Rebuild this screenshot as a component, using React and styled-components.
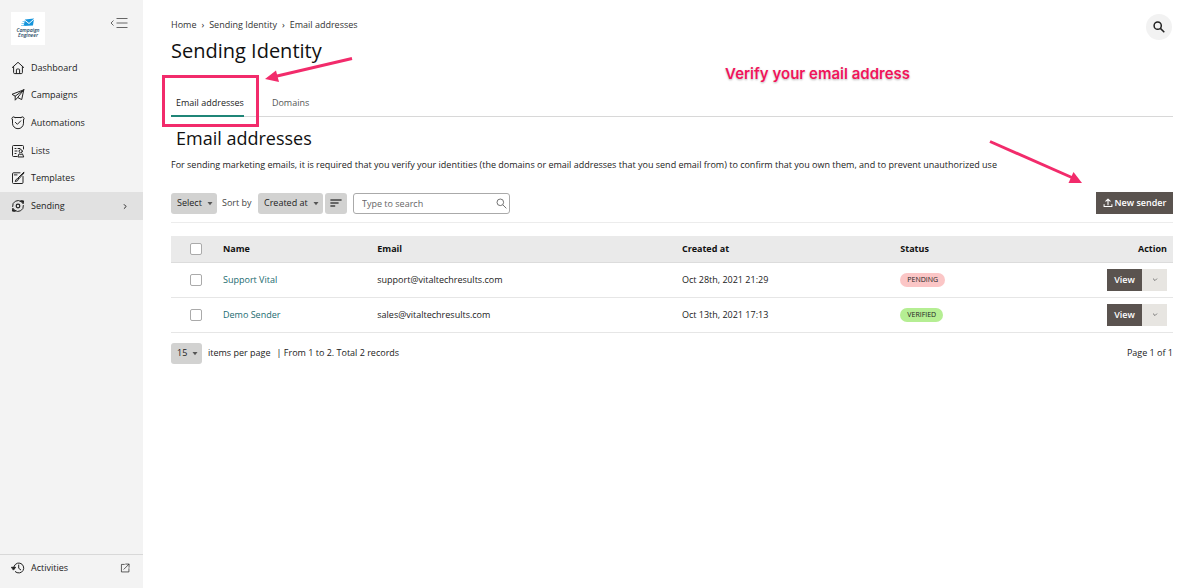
import React from "react";
import styled, { createGlobalStyle } from "styled-components";

const GlobalStyle = createGlobalStyle`
  * {
    box-sizing: border-box;
  }

  body {
    margin: 0;
    background: #fff;
    color: #222;
    font-family: "Open Sans", "Noto Sans", sans-serif;
    font-size: 9px;
    line-height: 14px;
  }

  button,
  input,
  select {
    font: inherit;
    color: inherit;
  }
`;

const Page = styled.div`
  display: flex;
  min-height: 100vh;
`;

const Sidebar = styled.aside`
  display: flex;
  flex-direction: column;
  flex: none;
  width: 143px;
  background: #f3f3f3;
`;

const SidebarTop = styled.div`
  display: flex;
  justify-content: space-between;
  align-items: flex-start;
  height: 54px;
  padding: 12px 15px 0 11px;
`;

const LogoLink = styled.a`
  display: block;
  width: 34px;
  height: 33px;
  background: #fff;
`;

const IconButton = styled.button`
  display: flex;
  align-items: center;
  justify-content: center;
  padding: 0;
  border: 0;
  background: none;
  color: #666;
`;

const CollapseButton = styled(IconButton)`
  width: 18px;
  height: 22px;
`;

const Nav = styled.nav`
  display: grid;
  grid-auto-rows: 1fr;
  height: 166px;
`;

const NavLink = styled.a`
  display: flex;
  align-items: center;
  gap: 6px;
  padding: 0 13px 0 11px;
  background: ${({ $active }) => ($active ? "#e1e1e1" : "transparent")};
  color: #222;
  text-decoration: none;

  span {
    flex: 1;
  }
`;

const SidebarBottom = styled.div`
  display: grid;
  height: 34px;
  margin-top: auto;
  padding-bottom: 8px;
  border-top: 1px solid #d8d8d8;
`;

const Main = styled.main`
  position: relative;
  flex: 1;
  min-width: 0;
  padding: 18px 27px 20px 28px;
`;

const SearchButton = styled(IconButton)`
  position: absolute;
  top: 14px;
  right: 28px;
  width: 26px;
  height: 26px;
  border-radius: 50%;
  background: #f2f2f2;
  color: #222;
`;

const Breadcrumbs = styled.nav`
  display: flex;
  gap: 5px;

  a {
    color: #333;
    text-decoration: none;
  }
`;

const Title = styled.h1`
  margin: 4px 0 0;
  font-size: 20px;
  font-weight: 400;
  line-height: 30px;
  color: #111;
`;

const Tabs = styled.nav`
  display: flex;
  gap: 23px;
  margin-top: 24px;
  border-bottom: 1px solid #d8d8d8;
`;

const Tab = styled.a`
  height: 27px;
  margin-bottom: -1px;
  padding: 6px 0 0 5px;
  border-bottom: 2px solid ${({ $active }) => ($active ? "#1f8577" : "transparent")};
  color: ${({ $active }) => ($active ? "#222" : "#555")};
  text-decoration: none;
`;

const Heading = styled.h2`
  margin: 8px 0 0 5px;
  font-size: 18px;
  font-weight: 400;
  line-height: 26px;
  color: #111;
`;

const Description = styled.p`
  margin: 7px 0 0;
`;

const Toolbar = styled.div`
  display: flex;
  align-items: center;
  height: 46px;
  margin-top: 5px;
  padding-top: 15px;
  padding-bottom: 8px;
  border-bottom: 1px solid #ececec;
`;

const SelectBox = styled.span`
  position: relative;
  display: inline-block;
  width: ${({ $width }) => $width}px;

  select {
    display: block;
    width: 100%;
    height: 21px;
    padding: 0 0 0 6px;
    border: 0;
    border-radius: 3px;
    background: #d2d2d1;
    appearance: none;
  }

  svg {
    position: absolute;
    top: 8px;
    right: 4px;
    pointer-events: none;
  }
`;

const SortLabel = styled.label`
  flex: none;
  width: 41px;
  padding-left: 5px;
  color: #444;
`;

const SortButton = styled(IconButton)`
  width: 22px;
  height: 21px;
  margin: 0 6px 0 2px;
  border-radius: 3px;
  background: #d2d2d1;
  color: #444;
`;

const SearchBox = styled.div`
  position: relative;
  width: 157px;

  input {
    display: block;
    width: 100%;
    height: 21px;
    padding: 0 20px 0 8px;
    border: 1px solid #aaa;
    border-radius: 3px;
    background: #fff;
  }

  input::placeholder {
    color: #666;
    opacity: 1;
  }

  svg {
    position: absolute;
    top: 5px;
    right: 3px;
    color: #666;
    pointer-events: none;
  }
`;

const DarkButton = styled.button`
  display: flex;
  align-items: center;
  justify-content: center;
  gap: 2px;
  width: ${({ $width }) => $width}px;
  height: 22px;
  padding: 0;
  border: 0;
  background: #5a534f;
  color: #fff;
  font-weight: 600;
`;

const NewSender = styled(DarkButton)`
  margin-left: auto;
`;

const Table = styled.table`
  width: 100%;
  margin-top: 13px;
  border-collapse: collapse;
  table-layout: fixed;

  th,
  td {
    padding: 0 6px;
    border-bottom: 1px solid #e6e6e6;
    text-align: left;
  }

  th {
    height: 26px;
    background: #eaeaea;
    border-color: #dcdcdc;
    font-weight: 700;
    color: #111;
  }

  td {
    height: 35px;
  }

  th:last-child {
    text-align: right;
  }
`;

const Col = styled.col`
  width: ${({ $width }) => $width};
`;

const Checkbox = styled.input`
  display: block;
  width: 12px;
  height: 12px;
  margin: 0 0 0 13px;
  border: 1px solid #aaa;
  border-radius: 2px;
  background: #fff;
  appearance: none;

  &:checked {
    background: #1f8577;
  }
`;

const SenderLink = styled.a`
  color: #226b70;
  text-decoration: none;
`;

const Status = styled.span`
  display: inline-block;
  padding: 0 7px;
  border-radius: 7px;
  background: ${({ $verified }) => ($verified ? "#b5ee93" : "#fbc6c6")};
  font-size: 7px;
  line-height: 14px;
  vertical-align: middle;
`;

const Actions = styled.div`
  display: flex;
  justify-content: flex-end;
`;

const MoreButton = styled(IconButton)`
  width: 25px;
  height: 22px;
  background: #e7e5e1;
`;

const Footer = styled.div`
  display: flex;
  align-items: center;
  gap: 6px;
  margin-top: 10px;
`;

const PageCount = styled.span`
  margin-left: auto;
`;

const Highlight = styled.div`
  position: absolute;
  top: 75px;
  left: 19px;
  width: 97px;
  height: 52px;
  border: 3px solid #f22b6b;
  pointer-events: none;
`;

const Callout = styled.div`
  position: absolute;
  top: 64px;
  right: 290px;
  color: #f0145a;
  font-family: Inter, "Liberation Sans", sans-serif;
  font-size: 15px;
  font-weight: 600;
  line-height: 20px;
  text-shadow: 0 0 2px #fff, 0 1px 2px rgba(0, 0, 0, 0.35);
`;

const TabArrow = styled.svg`
  position: absolute;
  top: 54px;
  left: 120px;
  pointer-events: none;
`;

const SenderArrow = styled.svg`
  position: absolute;
  top: 138px;
  right: 114px;
  pointer-events: none;
`;

const Icon = ({ size = 14, children }) => (
  <svg
    width={size}
    height={size}
    viewBox="0 0 14 14"
    fill="none"
    stroke="currentColor"
    strokeWidth="1"
    strokeLinecap="round"
    strokeLinejoin="round"
    aria-hidden="true"
  >
    {children}
  </svg>
);

const Caret = () => (
  <svg width="6" height="5" viewBox="0 0 6 5" aria-hidden="true">
    <path d="M.5 1h5L3 4.200z" fill="#555" />
  </svg>
);

const Magnifier = ({ size, width }) => (
  <svg width={size} height={size} viewBox="0 0 12 12" fill="none" stroke="currentColor" strokeWidth={width} aria-hidden="true">
    <circle cx="4.700" cy="4.700" r="3.600" />
    <path d="M7.400 7.400L11.300 11.300" />
  </svg>
);

const Logo = () => (
  <svg width="34" height="33" viewBox="0 0 34 33" aria-hidden="true">
    <path d="M14 7.500L23 6.500L22 13.500L12.500 14z" fill="#1595dc" />
    <path d="M13.500 8L18 11.500L22.800 7.200" fill="none" stroke="#fff" strokeWidth="1" />
    <path d="M10.500 11.500h3M11.500 9.500h2M10 13.500h4" stroke="#51b8ea" strokeWidth=".7" />
    <g
      fill="#24465f"
      fontFamily="Open Sans, sans-serif"
      fontSize="5"
      fontWeight="600"
      fontStyle="italic"
      textAnchor="middle"
    >
      <text x="17" y="20">Campaign</text>
      <text x="17" y="25">Engineer</text>
    </g>
  </svg>
);

const navItems = [
  {
    label: "Dashboard",
    icon: (
      <>
        <path d="M1.300 6.500L7 1.300L12.700 6.500M2.600 5.500V11.500Q2.600 12.600 3.700 12.600H10.300Q11.400 12.600 11.400 11.500V5.500" />
        <path d="M5.400 12.500V8.800Q5.400 8 6.200 8H7.800Q8.600 8 8.600 8.800V12.500" />
      </>
    ),
  },
  {
    label: "Campaigns",
    icon: <path d="M12.800 1.800L1 6.300L4.200 8.200L12.800 1.800L10.700 11.600L6.700 9.500L12.800 1.800M4.200 8.200V12.200L6.700 9.500" />,
  },
  {
    label: "Automations",
    icon: (
      <>
        <path d="M4 1.500H10M1.300 3.700A1.500 1.500 0 0 1 4 1.500M12.700 3.700A1.500 1.500 0 0 0 10 1.500M1.500 3.700V7.200A5.500 5.500 0 0 0 12.500 7.200V3.700" />
        <path d="M4.400 6.400L6.400 8.300L9.800 4.800" />
      </>
    ),
  },
  {
    label: "Lists",
    icon: (
      <>
        <path d="M6 12.500H2.500Q1.500 12.500 1.500 11.500V2.500Q1.500 1.500 2.500 1.500H11.500Q12.500 1.500 12.500 2.500V5" />
        <path d="M4 4.500H5M7 4.500H9M4 7H6M4 9.500H5" />
        <circle cx="9.700" cy="7.200" r="1.600" />
        <path d="M7 12.600L8 9.800L9.700 10.600L11.400 9.800L12.600 12.600z" />
      </>
    ),
  },
  {
    label: "Templates",
    icon: (
      <>
        <path d="M9 1.800H2.500Q1.500 1.800 1.500 2.800V11.500Q1.500 12.500 2.500 12.500H11Q12 12.500 12 11.500V5.500" />
        <path d="M3.300 3.900H6M12.800 1.200L7 7L7.800 7.900L13 2M6.800 7.500Q4.500 8 4.200 10.500Q7 10.500 7.500 8.300z" />
      </>
    ),
  },
  {
    label: "Sending",
    active: true,
    icon: (
      <>
        <circle cx="7" cy="7" r="1.800" strokeWidth="1.200" />
        <path d="M1.600 7.500A5.400 5.400 0 0 1 10.300 2.700M12.400 6.500A5.400 5.400 0 0 1 3.700 11.300" />
        <path d="M10 1.700L12.600 1.900L12.200 4.400zM4 12.300L1.400 12.100L1.800 9.600z" fill="currentColor" />
      </>
    ),
  },
];

const senders = [
  {
    name: "Support Vital",
    email: "support@vitaltechresults.com",
    created: "Oct 28th, 2021 21:29",
    status: "PENDING",
  },
  {
    name: "Demo Sender",
    email: "sales@vitaltechresults.com",
    created: "Oct 13th, 2021 17:13",
    status: "VERIFIED",
  },
];

const SideNav = () => (
  <Sidebar>
    <SidebarTop>
      <LogoLink href="#" aria-label="Campaign Engineer">
        <Logo />
      </LogoLink>
      <CollapseButton type="button" aria-label="Collapse menu">
        <svg width="18" height="12" viewBox="0 0 18 12" fill="none" stroke="currentColor">
          <path d="M3.500 3.500L1 6L3.500 8.500M6.500 1.500H17.500M6.500 6H17.500M6.500 10.500H17.500" />
        </svg>
      </CollapseButton>
    </SidebarTop>
    <Nav>
      {navItems.map((item) => (
        <NavLink href="#" key={item.label} $active={item.active}>
          <Icon>{item.icon}</Icon>
          <span>{item.label}</span>
          {item.active && (
            <Icon size={9}>
              <path d="M5 4L8 7L5 10" strokeWidth="1.500" />
            </Icon>
          )}
        </NavLink>
      ))}
    </Nav>
    <SidebarBottom>
      <NavLink href="#">
        <Icon>
          <path d="M2.700 7A5 5 0 1 1 4.300 10.700M7.700 4V7.300L9.700 8.800" />
          <path d="M.8 6.300H4.600L2.700 8.800z" fill="currentColor" />
        </Icon>
        <span>Activities</span>
        <Icon size={10}>
          <path d="M6 2H2V12.500H12.500V8M8 1.500H12.700V6M12.500 1.700L5.500 8.700" />
        </Icon>
      </NavLink>
    </SidebarBottom>
  </Sidebar>
);

const SenderTable = () => (
  <Table>
    <colgroup>
      <Col $width="46px" />
      <Col $width="15.4%" />
      <Col $width="30.4%" />
      <Col $width="21.8%" />
      <Col />
      <Col $width="90px" />
    </colgroup>
    <thead>
      <tr>
        <th>
          <Checkbox type="checkbox" aria-label="Select all senders" />
        </th>
        <th>Name</th>
        <th>Email</th>
        <th>Created at</th>
        <th>Status</th>
        <th>Action</th>
      </tr>
    </thead>
    <tbody>
      {senders.map((sender) => (
        <tr key={sender.email}>
          <td>
            <Checkbox type="checkbox" aria-label={`Select ${sender.name}`} />
          </td>
          <td>
            <SenderLink href="#">{sender.name}</SenderLink>
          </td>
          <td>{sender.email}</td>
          <td>{sender.created}</td>
          <td>
            <Status $verified={sender.status === "VERIFIED"}>{sender.status}</Status>
          </td>
          <td>
            <Actions>
              <DarkButton type="button" $width={35}>
                View
              </DarkButton>
              <MoreButton type="button" aria-label="More actions">
                <Icon size={8}>
                  <path d="M4 5L7 8L10 5" strokeWidth="1.500" />
                </Icon>
              </MoreButton>
            </Actions>
          </td>
        </tr>
      ))}
    </tbody>
  </Table>
);

const Annotations = () => (
  <>
    <Highlight />
    <Callout>Verify your email address</Callout>
    <TabArrow width="92" height="34" viewBox="0 0 92 34" aria-hidden="true">
      <path d="M89 4.500L12 22.500" stroke="#f22b6b" strokeWidth="3" />
      <path d="M2 25L13 16.500L16 28z" fill="#f22b6b" />
    </TabArrow>
    <SenderArrow width="98" height="48" viewBox="0 0 98 48" aria-hidden="true">
      <path d="M2 3.500L85 40" stroke="#f22b6b" strokeWidth="3" />
      <path d="M94 45L80.500 45L85.500 34z" fill="#f22b6b" />
    </SenderArrow>
  </>
);

const App = () => {
  return (
    <Page>
      <GlobalStyle />
      <SideNav />
      <Main>
        <SearchButton type="button" aria-label="Search">
          <Magnifier size={12} width={1.5} />
        </SearchButton>
        <Breadcrumbs aria-label="Breadcrumb">
          <a href="#">Home</a>
          <span>›</span>
          <a href="#">Sending Identity</a>
          <span>›</span>
          <a href="#">Email addresses</a>
        </Breadcrumbs>
        <Title>Sending Identity</Title>
        <Tabs>
          <Tab href="#" $active>
            Email addresses
          </Tab>
          <Tab href="#">Domains</Tab>
        </Tabs>
        <Heading>Email addresses</Heading>
        <Description>
          For sending marketing emails, it is required that you verify your identities (the domains or
          email addresses that you send email from) to confirm that you own them, and to prevent
          unauthorized use
        </Description>
        <Toolbar>
          <SelectBox $width={46}>
            <select aria-label="Selection">
              <option>Select</option>
            </select>
            <Caret />
          </SelectBox>
          <SortLabel htmlFor="sort">Sort by</SortLabel>
          <SelectBox $width={65}>
            <select id="sort">
              <option>Created at</option>
            </select>
            <Caret />
          </SelectBox>
          <SortButton type="button" aria-label="Sort direction">
            <Icon size={12}>
              <path d="M1 3.500H13M1 7H9.500M1 10.500H5.500" strokeWidth="1.500" />
            </Icon>
          </SortButton>
          <SearchBox>
            <input type="text" placeholder="Type to search" aria-label="Type to search" />
            <Magnifier size={11} width={1} />
          </SearchBox>
          <NewSender type="button" $width={77}>
            <Icon size={10}>
              <path d="M7 9.500V2M4 4.500L7 1.500L10 4.500M1.500 9V12H12.500V9" strokeWidth="1.500" />
            </Icon>
            New sender
          </NewSender>
        </Toolbar>
        <SenderTable />
        <Footer>
          <SelectBox $width={31}>
            <select id="per-page">
              <option>15</option>
            </select>
            <Caret />
          </SelectBox>
          <label htmlFor="per-page">items per page</label>
          <span>| From 1 to 2. Total 2 records</span>
          <PageCount>Page 1 of 1</PageCount>
        </Footer>
        <Annotations />
      </Main>
    </Page>
  );
};

export default App;
